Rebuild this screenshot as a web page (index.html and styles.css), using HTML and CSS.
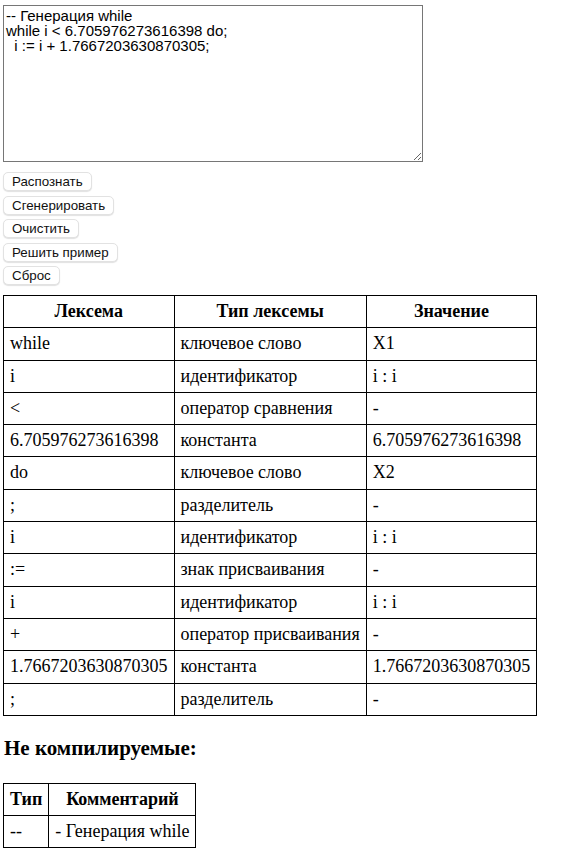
FILE: index.html
```html
<!DOCTYPE html>
<html>
<head>
<meta charset="utf-8">
<link rel="stylesheet" href="styles.css">
</head>
<body>
<textarea class="code">-- Генерация while
while i &lt; 6.705976273616398 do;
  i := i + 1.7667203630870305;</textarea>
<div class="buttons">
  <button class="btn">Распознать</button>
  <button class="btn">Сгенерировать</button>
  <button class="btn">Очистить</button>
  <button class="btn">Решить пример</button>
  <button class="btn">Сброс</button>
</div>
<table class="grid lexemes">
  <tr><th>Лексема</th><th>Тип лексемы</th><th>Значение</th></tr>
  <tr><td>while</td><td>ключевое слово</td><td>X1</td></tr>
  <tr><td>i</td><td>идентификатор</td><td>i : i</td></tr>
  <tr><td>&lt;</td><td>оператор сравнения</td><td>-</td></tr>
  <tr><td>6.705976273616398</td><td>константа</td><td>6.705976273616398</td></tr>
  <tr><td>do</td><td>ключевое слово</td><td>X2</td></tr>
  <tr><td>;</td><td>разделитель</td><td>-</td></tr>
  <tr><td>i</td><td>идентификатор</td><td>i : i</td></tr>
  <tr><td>:=</td><td>знак присваивания</td><td>-</td></tr>
  <tr><td>i</td><td>идентификатор</td><td>i : i</td></tr>
  <tr><td>+</td><td>оператор присваивания</td><td>-</td></tr>
  <tr><td>1.7667203630870305</td><td>константа</td><td>1.7667203630870305</td></tr>
  <tr><td>;</td><td>разделитель</td><td>-</td></tr>
</table>
<h3 class="title">Не компилируемые:</h3>
<table class="grid">
  <tr><th>Тип</th><th>Комментарий</th></tr>
  <tr><td>--</td><td>- Генерация while</td></tr>
</table>
</body>
</html>
```
FILE: styles.css
```css
html, body {
  margin: 0;
  background: #fff;
}
body {
  padding: 5px 3px;
  font-family: "Liberation Serif", "Times New Roman", serif;
  font-size: 18px;
  color: #000;
}
.code {
  display: block;
  box-sizing: border-box;
  width: 420px;
  height: 157px;
  margin: 0;
  padding: 2px 2px;
  border: 1px solid #767676;
  font-family: "Liberation Sans", Arial, sans-serif;
  font-size: 15px;
  line-height: 15px;
  color: #000;
  resize: both;
}
.buttons {
  display: flex;
  flex-direction: column;
  align-items: flex-start;
  gap: 4.5px;
  margin-top: 10px;
}
.btn {
  box-sizing: border-box;
  height: 19px;
  margin: 0;
  padding: 0 8px;
  background: #fff;
  border: 1px solid #e2e2e2;
  border-radius: 5px;
  box-shadow: 0 1px 1px rgba(0,0,0,0.12);
  font-family: "Liberation Sans", Arial, sans-serif;
  font-size: 13.33px;
  color: #111;
}
.grid {
  border-collapse: collapse;
  margin-top: 10px;
}
.grid th, .grid td {
  border: 1px solid #000;
  padding: 6px 6px;
  line-height: 19.3px;
  text-align: left;
}
.grid th {
  text-align: center;
  font-weight: bold;
}
.title {
  font-size: 21px;
  font-weight: bold;
  margin: 20px 0 22px 1px;
}
```
